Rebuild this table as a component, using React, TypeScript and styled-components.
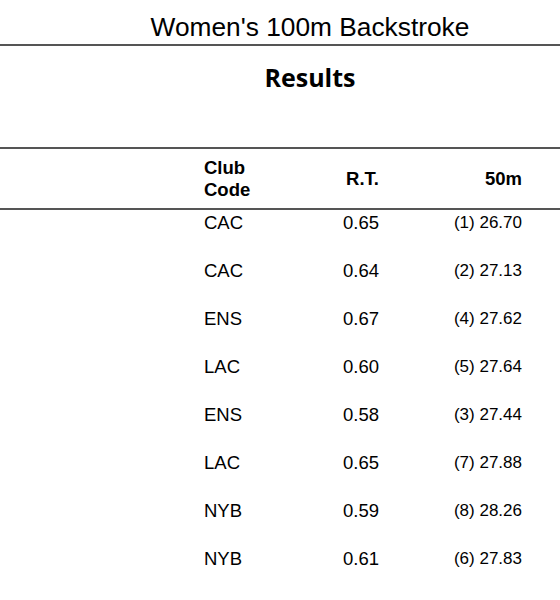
import React from "react";
import styled, { createGlobalStyle } from "styled-components";

const Global = createGlobalStyle`
  html, body { margin: 0; padding: 0; background: #fff; }
  body { font-family: "Liberation Sans", Arial, sans-serif; color: #000; overflow: hidden; }
`;

const Page = styled.div`
  width: 560px;
  height: 600px;
  overflow: hidden;
  background: #fff;
`;

const EventTitle = styled.h1`
  margin: 0;
  padding: 12px 0 0 60px;
  height: 32px;
  font-family: "Liberation Sans", Arial, sans-serif;
  font-weight: 400;
  font-size: 26.3px;
  line-height: 30px;
  text-align: center;
  border-bottom: 2px solid #555;
`;

const SectionTitle = styled.h2`
  margin: 0;
  padding: 16px 0 0 60px;
  height: 85px;
  font-family: "Open Sans", "Noto Sans", sans-serif;
  font-weight: 700;
  font-size: 25px;
  line-height: 30px;
  text-align: center;
`;

const Table = styled.div`
  display: grid;
  grid-template-columns: 192px 105px 95px 131px 37px;
`;

const HeaderRow = styled.div`
  display: contents;
`;

const HeadCell = styled.div<{ $align?: "left" | "right"; $pr?: number }>`
  height: 59px;
  border-top: 2px solid #555;
  border-bottom: 2px solid #555;
  padding: 0 ${(p) => p.$pr ?? 12}px 0 12px;
  display: flex;
  align-items: center;
  justify-content: ${(p) => (p.$align === "right" ? "flex-end" : "flex-start")};
  font-weight: 700;
  font-size: 18.5px;
  line-height: 22px;
  text-align: ${(p) => p.$align ?? "left"};
`;

const Cell = styled.div<{ $align?: "left" | "right"; $small?: boolean; $pr?: number }>`
  height: 48px;
  box-sizing: border-box;
  padding: 2px ${(p) => p.$pr ?? 12}px 0 12px;
  text-align: ${(p) => p.$align ?? "left"};
  font-size: ${(p) => (p.$small ? "17px" : "18.5px")};
  line-height: 22px;
`;

const rows = [
  ["CAC", "0.65", "(1) 26.70"],
  ["CAC", "0.64", "(2) 27.13"],
  ["ENS", "0.67", "(4) 27.62"],
  ["LAC", "0.60", "(5) 27.64"],
  ["ENS", "0.58", "(3) 27.44"],
  ["LAC", "0.65", "(7) 27.88"],
  ["NYB", "0.59", "(8) 28.26"],
  ["NYB", "0.61", "(6) 27.83"],
];

export default function App() {
  return (
    <Page>
      <Global />
      <EventTitle>Women's 100m Backstroke</EventTitle>
      <SectionTitle>Results</SectionTitle>
      <Table>
        <HeaderRow>
          <HeadCell />
          <HeadCell>
            Club
            <br />
            Code
          </HeadCell>
          <HeadCell $align="right" $pr={13}>R.T.</HeadCell>
          <HeadCell $align="right" $pr={1}>50m</HeadCell>
          <HeadCell />
        </HeaderRow>
        {rows.map((r, i) => (
          <React.Fragment key={i}>
            <Cell />
            <Cell>{r[0]}</Cell>
            <Cell $align="right" $pr={13}>{r[1]}</Cell>
            <Cell $align="right" $small $pr={1}>
              {r[2]}
            </Cell>
            <Cell />
          </React.Fragment>
        ))}
      </Table>
    </Page>
  );
}
